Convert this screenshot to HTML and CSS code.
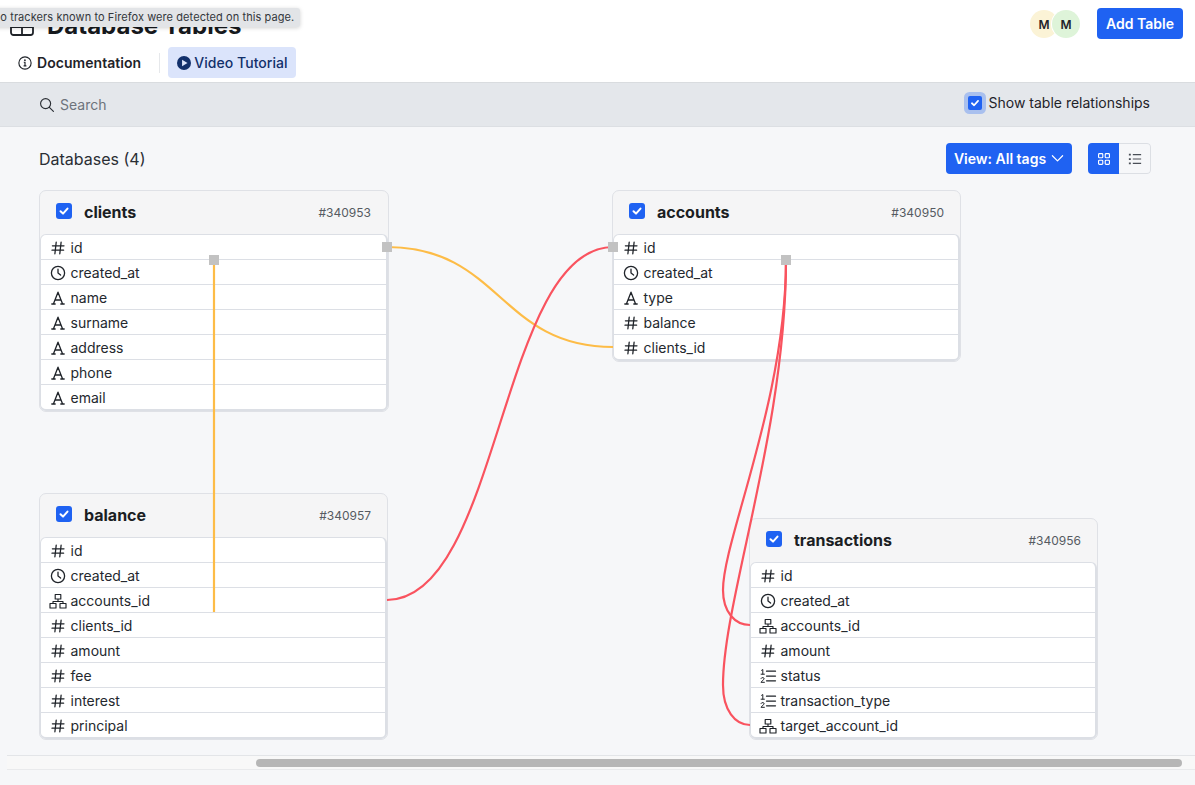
FILE: index.html
```html
<!DOCTYPE html>
<html lang="en">
<head>
<meta charset="utf-8">
<title>Database Tables</title>
<link rel="stylesheet" href="styles.css">
</head>
<body>
<svg class="defs" width="0" height="0" aria-hidden="true">
  <symbol id="i-hash" viewBox="0 0 16 16"><path d="M6.200 2.200 4.900 13.800M11.100 2.200 9.800 13.800M2.400 5.800h11.600M2 10.200h11.600" fill="none" stroke="currentColor" stroke-width="1.300" stroke-linecap="round"/></symbol>
  <symbol id="i-clock" viewBox="0 0 16 16"><circle cx="8" cy="8" r="6.600" fill="none" stroke="currentColor" stroke-width="1.300"/><path d="M8 4.200V8l2.600 2" fill="none" stroke="currentColor" stroke-width="1.300" stroke-linecap="round" stroke-linejoin="round"/></symbol>
  <symbol id="i-text" viewBox="0 0 16 16"><path d="M3.400 14 8 2.200 12.600 14M5 10h6M1.800 14h3.400M10.800 14h3.400" fill="none" stroke="currentColor" stroke-width="1.300" stroke-linecap="round" stroke-linejoin="round"/></symbol>
  <symbol id="i-net" viewBox="0 0 18 16"><path d="M6.200 1.500h5.600v4.500H6.200zM1 10.500h6v4.500H1zM11 10.500h6v4.500h-6zM9 6v2.500M4 10.500V8.500h10v2" fill="none" stroke="currentColor" stroke-width="1.150" stroke-linejoin="round"/></symbol>
  <symbol id="i-enum" viewBox="0 0 18 16"><path d="M7.500 3.200h9M7.500 8h9M7.500 12.800h9" fill="none" stroke="currentColor" stroke-width="1.250" stroke-linecap="round"/><path d="M2.600 2.300l1.200-.8v4.600M2.100 6.200h3.300M2 10.400c.4-1.200 3.100-1.200 3.100.3 0 1.100-2.200 2-3.100 3.600h3.400" fill="none" stroke="currentColor" stroke-width="1" stroke-linecap="round" stroke-linejoin="round"/></symbol>
  <symbol id="i-check" viewBox="0 0 16 16"><path d="M4.500 8.300 7 10.600l4.500-5" fill="none" stroke="#fff" stroke-width="2" stroke-linecap="round" stroke-linejoin="round"/></symbol>
</svg>

<header class="top">
  <div class="title-row">
    <div class="title-group">
      <svg class="title-icon" viewBox="0 0 24 24" aria-hidden="true"><rect x="1" y="3" width="22" height="18" rx="2.500" fill="none" stroke="currentColor" stroke-width="1.800"/><path d="M1 13h22M12 13v8" fill="none" stroke="currentColor" stroke-width="1.800"/></svg>
      <h1 class="title">Database Tables</h1>
    </div>
    <div class="actions">
      <div class="avatars">
        <span class="avatar avatar-yellow">M</span>
        <span class="avatar avatar-green">M</span>
      </div>
      <button class="btn btn-add">Add Table</button>
    </div>
  </div>
  <nav class="links">
    <a class="link">
      <svg class="link-icon" viewBox="0 0 16 16" aria-hidden="true"><circle cx="8" cy="8" r="7" fill="none" stroke="currentColor" stroke-width="1.300"/><path d="M6.600 7.200H8v4M6.400 11.300h3.200" fill="none" stroke="currentColor" stroke-width="1.300"/><circle cx="7.900" cy="4.800" r="1" fill="currentColor"/></svg>
      Documentation
    </a>
    <span class="link-sep"></span>
    <a class="link link-video">
      <svg class="link-icon" viewBox="0 0 16 16" aria-hidden="true"><circle cx="8" cy="8" r="8" fill="currentColor"/><path d="M5.800 4.300v7.400L12 8z" fill="#dbe4fb"/></svg>
      Video Tutorial
    </a>
  </nav>
</header>

<div class="tooltip">No trackers known to Firefox were detected on this page.</div>

<section class="toolbar">
  <label class="search">
    <svg class="search-icon" viewBox="1 1 14.500 14.500" aria-hidden="true"><circle cx="6.800" cy="6.800" r="5.200" fill="none" stroke="currentColor" stroke-width="1.200"/><path d="m10.700 10.700 4.200 4.200" fill="none" stroke="currentColor" stroke-width="1.200" stroke-linecap="round"/></svg>
    <span>Search</span>
  </label>
  <label class="rel-toggle">
    <span class="check check-ring"><svg viewBox="0 0 16 16"><use href="#i-check"/></svg></span>
    Show table relationships
  </label>
</section>

<main class="main">
  <div class="main-head">
    <h2 class="db-count">Databases (4)</h2>
    <div class="view-tools">
      <button class="btn btn-view">View: All tags
        <svg class="chev" viewBox="0 0 14 14" aria-hidden="true"><path d="m1.500 4 5.500 5.500L12.500 4" fill="none" stroke="currentColor" stroke-width="1.300" stroke-linecap="round" stroke-linejoin="round"/></svg>
      </button>
      <div class="toggle">
        <span class="toggle-btn toggle-on"><svg viewBox="0 0 16 16" aria-hidden="true"><g fill="none" stroke="currentColor" stroke-width="1.300"><rect x="1.800" y="1.800" width="4.800" height="4.800" rx="1"/><rect x="9.400" y="1.800" width="4.800" height="4.800" rx="1"/><rect x="1.800" y="9.400" width="4.800" height="4.800" rx="1"/><rect x="9.400" y="9.400" width="4.800" height="4.800" rx="1"/></g></svg></span>
        <span class="toggle-btn toggle-off"><svg viewBox="0 0 16 16" aria-hidden="true"><path d="M5.500 3h9.500M5.500 8h9.500M5.500 13h9.500" fill="none" stroke="currentColor" stroke-width="1.300"/><path d="M1 2h2.200v2H1zM1 7h2.200v2H1zM1 12h2.200v2H1z" fill="currentColor"/></svg></span>
      </div>
    </div>
  </div>

  <div class="diagram">
    <article class="node node-clients">
      <div class="node-head"><span class="check"><svg viewBox="0 0 16 16"><use href="#i-check"/></svg></span><h3 class="node-name">clients</h3><span class="node-id">#340953</span></div>
      <ul class="fields">
        <li class="field"><svg class="ficon"><use href="#i-hash"/></svg>id</li>
        <li class="field"><svg class="ficon"><use href="#i-clock"/></svg>created_at</li>
        <li class="field"><svg class="ficon"><use href="#i-text"/></svg>name</li>
        <li class="field"><svg class="ficon"><use href="#i-text"/></svg>surname</li>
        <li class="field"><svg class="ficon"><use href="#i-text"/></svg>address</li>
        <li class="field"><svg class="ficon"><use href="#i-text"/></svg>phone</li>
        <li class="field"><svg class="ficon"><use href="#i-text"/></svg>email</li>
      </ul>
    </article>

    <article class="node node-accounts">
      <div class="node-head"><span class="check"><svg viewBox="0 0 16 16"><use href="#i-check"/></svg></span><h3 class="node-name">accounts</h3><span class="node-id">#340950</span></div>
      <ul class="fields">
        <li class="field"><svg class="ficon"><use href="#i-hash"/></svg>id</li>
        <li class="field"><svg class="ficon"><use href="#i-clock"/></svg>created_at</li>
        <li class="field"><svg class="ficon"><use href="#i-text"/></svg>type</li>
        <li class="field"><svg class="ficon"><use href="#i-hash"/></svg>balance</li>
        <li class="field"><svg class="ficon"><use href="#i-hash"/></svg>clients_id</li>
      </ul>
    </article>

    <article class="node node-balance">
      <div class="node-head"><span class="check"><svg viewBox="0 0 16 16"><use href="#i-check"/></svg></span><h3 class="node-name">balance</h3><span class="node-id">#340957</span></div>
      <ul class="fields">
        <li class="field"><svg class="ficon"><use href="#i-hash"/></svg>id</li>
        <li class="field"><svg class="ficon"><use href="#i-clock"/></svg>created_at</li>
        <li class="field"><svg class="ficon ficon-wide"><use href="#i-net"/></svg>accounts_id</li>
        <li class="field"><svg class="ficon"><use href="#i-hash"/></svg>clients_id</li>
        <li class="field"><svg class="ficon"><use href="#i-hash"/></svg>amount</li>
        <li class="field"><svg class="ficon"><use href="#i-hash"/></svg>fee</li>
        <li class="field"><svg class="ficon"><use href="#i-hash"/></svg>interest</li>
        <li class="field"><svg class="ficon"><use href="#i-hash"/></svg>principal</li>
      </ul>
    </article>

    <article class="node node-transactions">
      <div class="node-head"><span class="check"><svg viewBox="0 0 16 16"><use href="#i-check"/></svg></span><h3 class="node-name">transactions</h3><span class="node-id">#340956</span></div>
      <ul class="fields">
        <li class="field"><svg class="ficon"><use href="#i-hash"/></svg>id</li>
        <li class="field"><svg class="ficon"><use href="#i-clock"/></svg>created_at</li>
        <li class="field"><svg class="ficon ficon-wide"><use href="#i-net"/></svg>accounts_id</li>
        <li class="field"><svg class="ficon"><use href="#i-hash"/></svg>amount</li>
        <li class="field"><svg class="ficon ficon-wide"><use href="#i-enum"/></svg>status</li>
        <li class="field"><svg class="ficon ficon-wide"><use href="#i-enum"/></svg>transaction_type</li>
        <li class="field"><svg class="ficon ficon-wide"><use href="#i-net"/></svg>target_account_id</li>
      </ul>
    </article>

    <svg class="links-layer" viewBox="0 127 1195 658" aria-hidden="true">
      <g class="wire wire-yellow">
        <path d="M387 247C500 247 500 347 613 347"/>
        <path d="M214 260V612"/>
      </g>
      <g class="wire wire-red">
        <path d="M387 600C500 600 500 247 613 247"/>
        <path d="M786 260C786 400 723 540 723 590C723 612 735 625 750 625"/>
        <path d="M786 260C786 430 723 600 723 685C723 710 735 725 750 725"/>
      </g>
      <g class="handle">
        <rect x="209" y="255" width="10" height="10"/>
        <rect x="382" y="242" width="10" height="10"/>
        <rect x="608" y="242" width="10" height="10"/>
        <rect x="781" y="255" width="10" height="10"/>
      </g>
    </svg>
  </div>

  <div class="hscroll"><span class="hscroll-thumb"></span></div>
</main>
</body>
</html>
```

FILE: styles.css
```css
* { box-sizing: border-box; }
html, body { margin: 0; height: 100%; }
body {
  display: flex;
  flex-direction: column;
  height: 785px;
  overflow: hidden;
  position: relative;
  font-family: Inter, "Liberation Sans", sans-serif;
  color: #1f2329;
  background: #f6f7f9;
}
.defs { position: absolute; }

/* header */
.top {
  height: 83px;
  background: #fff;
  border-bottom: 1px solid #d9dcdf;
  display: flex;
  flex-direction: column;
}
.title-row {
  height: 47px;
  padding: 8px 12px 0 10px;
  display: flex;
  justify-content: space-between;
  align-items: flex-start;
}
.title-group { display: flex; align-items: center; gap: 13px; height: 36px; }
.title-icon { width: 24px; height: 24px; color: #1f2329; }
.title { margin: 0; font-size: 24px; line-height: 36px; font-weight: 700; color: #16191d; }
.actions { display: flex; align-items: flex-start; gap: 17px; }
.avatars { display: flex; padding-top: 2px; }
.avatar {
  width: 28px;
  height: 28px;
  border-radius: 50%;
  display: flex;
  align-items: center;
  justify-content: center;
  font-size: 12px;
  font-weight: 600;
}
.avatar-yellow { background: #fbf3d6; }
.avatar-green { background: #def4d9; margin-left: -6px; box-shadow: 0 0 0 1px #fff; }
.btn {
  border: 0;
  background: #1f62f2;
  color: #fff;
  font-family: inherit;
  font-weight: 600;
  font-size: 14px;
  border-radius: 4px;
}
.btn-add { width: 86px; height: 31px; }
.links { display: flex; align-items: center; padding-left: 18px; height: 31px; }
.link {
  display: flex;
  align-items: center;
  gap: 5px;
  font-size: 14px;
  font-weight: 600;
  letter-spacing: .05px;
  color: #1f2329;
}
.link-icon { width: 14px; height: 14px; flex: none; }
.link-sep { width: 1px; height: 20px; background: #e6e8eb; margin: 0 8px 0 18px; }
.link-video {
  height: 31px;
  width: 128px;
  padding-left: 9px;
  gap: 3px;
  font-weight: 500;
  background: #dbe4fb;
  color: #12306b;
  border-radius: 4px;
}

/* tooltip */
.tooltip {
  position: absolute;
  left: -8px;
  top: 8px;
  width: 308px;
  height: 19px;
  background: #e2e4e7;
  border-radius: 3px;
  box-shadow: 0 1px 4px rgba(0, 0, 0, .18);
  font-size: 11px;
  line-height: 19px;
  letter-spacing: .08px;
  color: #33373c;
  white-space: nowrap;
}

/* toolbar */
.toolbar {
  height: 44px;
  background: #e4e7eb;
  border-bottom: 1px solid #dcdfe3;
  display: flex;
  align-items: center;
  justify-content: space-between;
  padding: 0 45px 0 40px;
  font-size: 14px;
}
.search { display: flex; align-items: center; gap: 6px; color: #6d737b; }
.search-icon { width: 14px; height: 14px; color: #2b2f35; }
.rel-toggle { display: flex; align-items: center; gap: 7px; color: #1f2329; padding-bottom: 4px; }
.check {
  flex: none;
  width: 16px;
  height: 16px;
  border-radius: 3px;
  background: #1f62f2;
  display: block;
}
.check svg { display: block; width: 16px; height: 16px; }
.check-ring { width: 14px; height: 14px; box-shadow: 0 0 0 4px #a9c0ee; border-radius: 2px; }
.check-ring svg { width: 14px; height: 14px; }

/* main */
.main { flex: 1; position: relative; display: flex; flex-direction: column; }
.main-head {
  height: 62px;
  padding: 16px 44px 0 39px;
  display: flex;
  justify-content: space-between;
  align-items: flex-start;
}
.db-count { margin: 0; font-size: 16px; line-height: 33px; font-weight: 400; color: #2a2e34; }
.view-tools { display: flex; gap: 16px; }
.btn-view {
  width: 126px;
  height: 31px;
  display: flex;
  align-items: center;
  justify-content: center;
  gap: 5px;
}
.chev { width: 13px; height: 13px; }
.toggle { display: flex; width: 63px; height: 31px; border-radius: 4px; overflow: hidden; }
.toggle-btn { display: flex; align-items: center; justify-content: center; width: 32px; color: #4a4f57; }
.toggle-btn svg { width: 14px; height: 14px; }
.toggle-on { background: #1f62f2; color: #fff; width: 31px; }
.toggle-off { border: 1px solid #dcdfe4; border-left: 0; border-radius: 0 4px 4px 0; }

/* diagram */
.diagram { position: absolute; inset: 0; }
.node {
  position: absolute;
  width: 349px;
  background: #f5f5f6;
  border: 1px solid #dfe1e6;
  border-radius: 7px;
}
.node-clients { left: 39px; top: 63px; width: 350px; }
.node-accounts { left: 612px; top: 63px; }
.node-balance { left: 39px; top: 366px; }
.node-transactions { left: 749px; top: 391px; }
.node-head {
  height: 43px;
  display: flex;
  align-items: center;
  padding: 0 16px;
}
.node-clients .node-head { padding-right: 17px; }
.node-head .check { margin-bottom: 3px; }
.node-name { margin: 0 0 2px 12px; font-size: 16px; font-weight: 700; color: #1b1e23; flex: 1; }
.node-id { font-size: 12px; color: #565b62; }
.fields {
  list-style: none;
  margin: 0;
  padding: 0;
  background: #fff;
  border: solid #dcdfe5;
  border-width: 1px 2px 2px 1px;
  border-radius: 6px;
}
.field {
  height: 25px;
  display: flex;
  align-items: center;
  gap: 5px;
  padding: 1px 0 0 8.500px;
  font-size: 14px;
  color: #24282e;
  border-bottom: 1px solid #dcdfe5;
}
.field:last-child { border-bottom: 0; height: 24px; }
.ficon { width: 16px; height: 16px; flex: none; color: #1f2329; }
.ficon-wide { width: 18px; margin: 0 -1px; }
.links-layer { position: absolute; left: 0; top: 0; width: 1195px; height: 658px; pointer-events: none; }
.wire path { fill: none; stroke-width: 2.200; }
.wire-yellow path { stroke: #fdbc47; }
.wire-red path { stroke: #f9535f; }
.handle rect { fill: #c2c2c2; }

/* scrollbar */
.hscroll {
  position: absolute;
  left: 7px;
  right: 0;
  top: 628px;
  height: 15px;
  background: #f8f8f8;
  border-top: 1px solid #e3e5e8;
  border-bottom: 1px solid #e9eaec;
  padding: 3px 13px 0 249px;
}
.hscroll-thumb { display: block; height: 8px; border-radius: 4px; background: #b6b6b6; }
```
